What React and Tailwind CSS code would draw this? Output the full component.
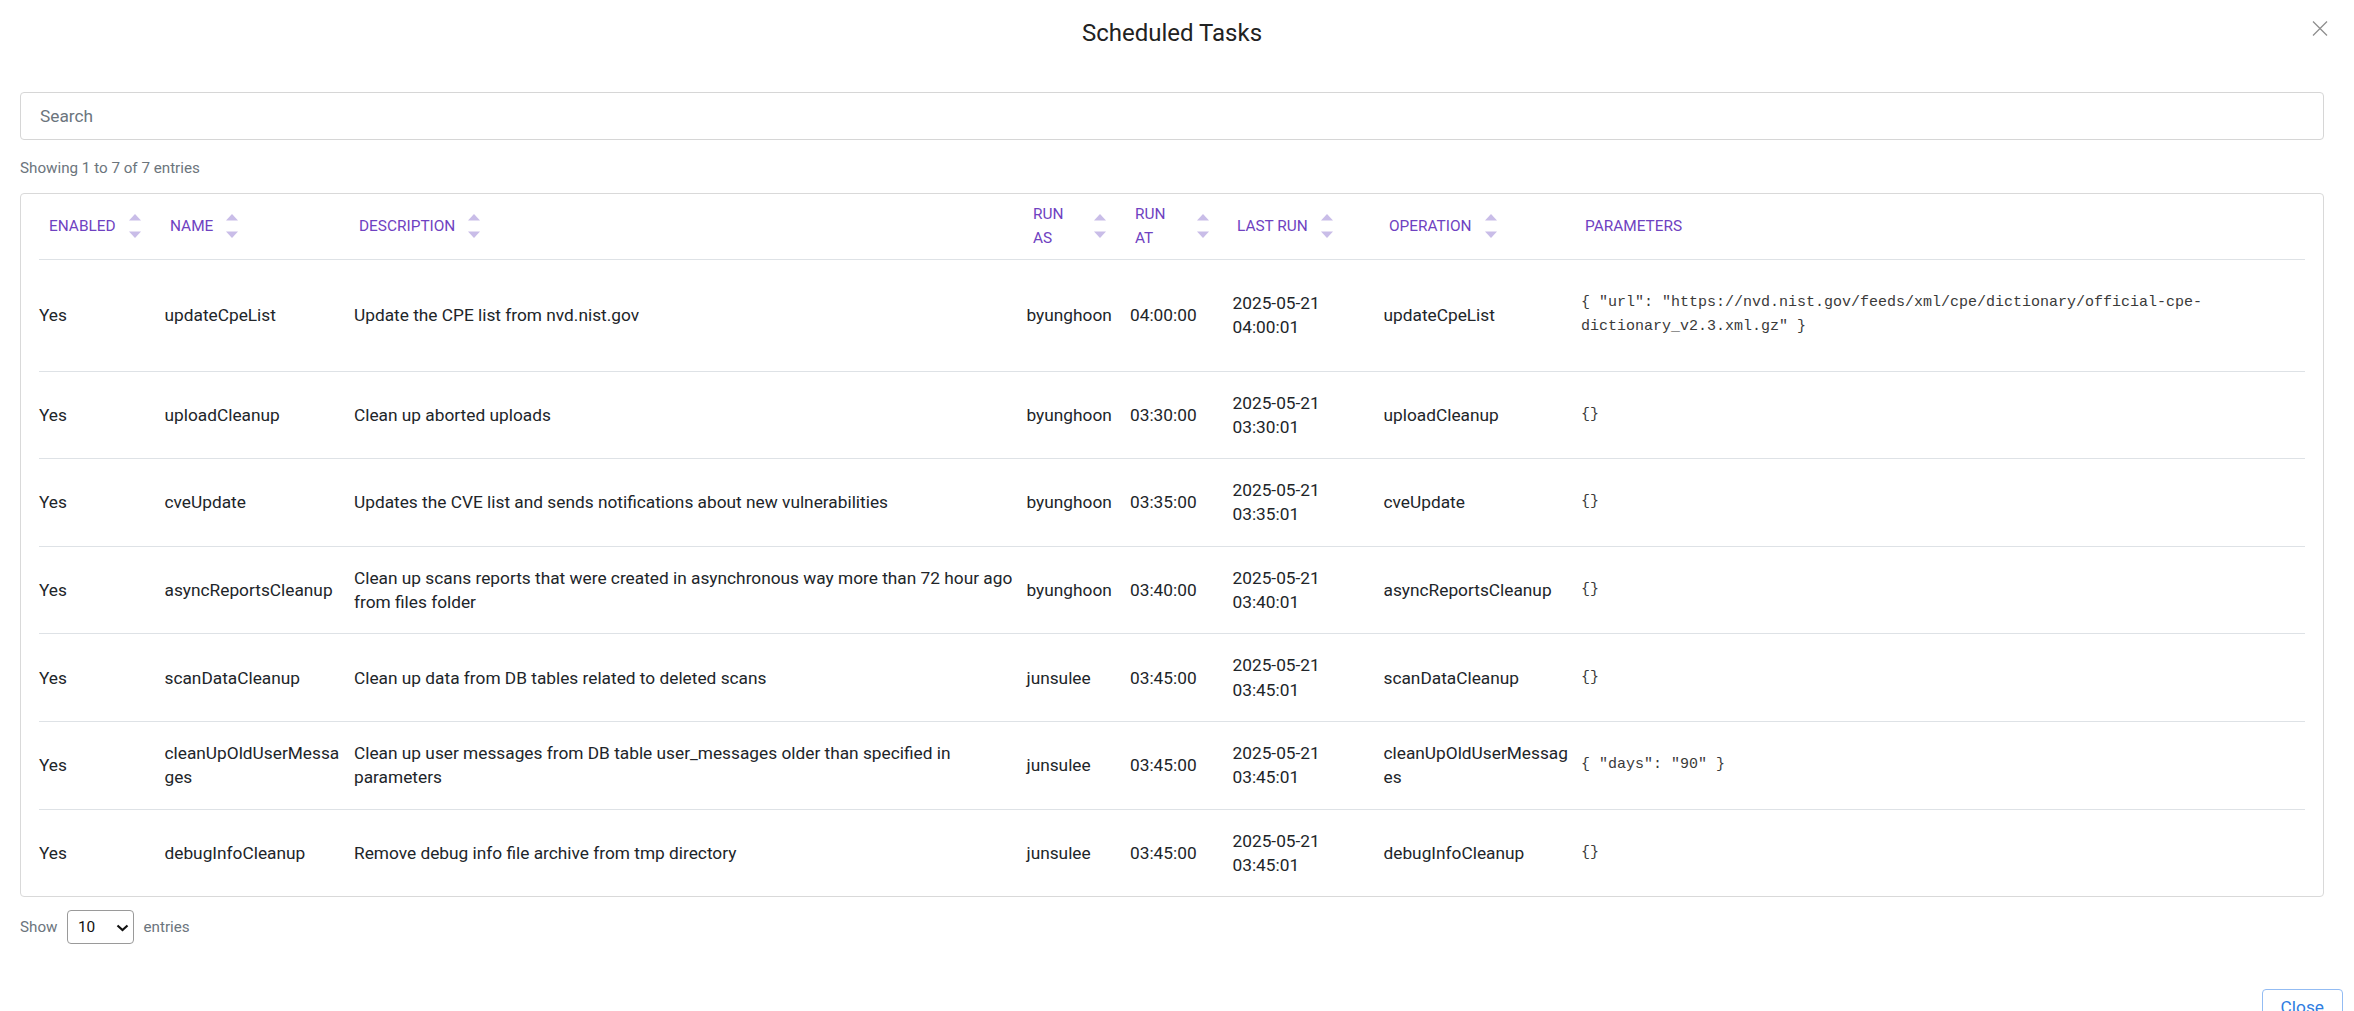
import React from 'react';

const tasks = [
  {
    name: 'updateCpeList',
    desc: 'Update the CPE list from nvd.nist.gov',
    runAs: 'byunghoon',
    runAt: '04:00:00',
    date: '2025-05-21',
    time: '04:00:01',
    op: 'updateCpeList',
    params: '{ "url": "https://nvd.nist.gov/feeds/xml/cpe/dictionary/official-cpe-dictionary_v2.3.xml.gz" }',
  },
  { name: 'uploadCleanup', desc: 'Clean up aborted uploads', runAs: 'byunghoon', runAt: '03:30:00', date: '2025-05-21', time: '03:30:01', op: 'uploadCleanup', params: '{}' },
  { name: 'cveUpdate', desc: 'Updates the CVE list and sends notifications about new vulnerabilities', runAs: 'byunghoon', runAt: '03:35:00', date: '2025-05-21', time: '03:35:01', op: 'cveUpdate', params: '{}' },
  { name: 'asyncReportsCleanup', desc: 'Clean up scans reports that were created in asynchronous way more than 72 hour ago from files folder', runAs: 'byunghoon', runAt: '03:40:00', date: '2025-05-21', time: '03:40:01', op: 'asyncReportsCleanup', params: '{}' },
  { name: 'scanDataCleanup', desc: 'Clean up data from DB tables related to deleted scans', runAs: 'junsulee', runAt: '03:45:00', date: '2025-05-21', time: '03:45:01', op: 'scanDataCleanup', params: '{}' },
  { name: 'cleanUpOldUserMessages', desc: 'Clean up user messages from DB table user_messages older than specified in parameters', runAs: 'junsulee', runAt: '03:45:00', date: '2025-05-21', time: '03:45:01', op: 'cleanUpOldUserMessages', params: '{ "days": "90" }' },
  { name: 'debugInfoCleanup', desc: 'Remove debug info file archive from tmp directory', runAs: 'junsulee', runAt: '03:45:00', date: '2025-05-21', time: '03:45:01', op: 'debugInfoCleanup', params: '{}' },
];

function SortArrows() {
  return (
    <svg width="12" height="24" viewBox="0 0 12 24" className="ml-[13px] shrink-0">
      <path d="M0 6.5 L6 0 L12 6.5 Z" fill="#c9bde8" />
      <path d="M0 17.5 L12 17.5 L6 24 Z" fill="#c9bde8" />
    </svg>
  );
}

function HeadCell({ className, children, sortable = true, labelClass = '' }) {
  return (
    <th className={`pt-[8px] pb-[9px] text-left align-middle font-normal ${className}`}>
      <div className="flex items-center">
        <span className={`uppercase leading-[24px] ${labelClass}`}>{children}</span>
        {sortable && <SortArrows />}
      </div>
    </th>
  );
}

export default function App() {
  return (
    <div className="relative min-h-screen bg-white pt-[19px] font-[Roboto,sans-serif] text-[#212529]">
      <button className="absolute right-[26px] top-[21px] text-[#8f8f8f]" aria-label="close">
        <svg width="16" height="15" viewBox="0 0 16 15" fill="none" stroke="currentColor" strokeWidth="1.3">
          <path d="M1 0.5 L15 14.5 M15 0.5 L1 14.5" />
        </svg>
      </button>

      <div className="pl-[20px] pr-[30px]">
        <h1 className="text-center text-[24px] leading-[29px] font-normal text-[#222]">Scheduled Tasks</h1>

        <input
          type="text"
          placeholder="Search"
          className="mt-[44px] block h-[48px] w-full rounded-[4px] border border-[#d6d6d6] pl-[19px] text-[17.3px] outline-none placeholder:text-[#6c757d]"
        />

        <div className="mt-[17px] text-[15.2px] leading-[22px] text-[#6c757d]">Showing 1 to 7 of 7 entries</div>

        <div className="mt-[14px] rounded-[4px] border border-[#d9d9d9] px-[18px]">
          <table className="w-full table-fixed">
            <colgroup>
              <col className="w-[125.5px]" />
              <col className="w-[189.5px]" />
              <col className="w-[672.5px]" />
              <col className="w-[103.5px]" />
              <col className="w-[102.5px]" />
              <col className="w-[151px]" />
              <col className="w-[197.5px]" />
              <col />
            </colgroup>
            <thead>
              <tr className="border-b border-[#dee2e6] text-[15.4px] text-[#6f42c1]">
                <HeadCell className="pl-[10px]">Enabled</HeadCell>
                <HeadCell className="pl-[5.5px]">Name</HeadCell>
                <HeadCell className="pl-[5px]">Description</HeadCell>
                <HeadCell className="pl-[6.5px]" labelClass="w-[48px]">
                  Run<br />As
                </HeadCell>
                <HeadCell className="pl-[5px]" labelClass="w-[49px]">
                  Run<br />At
                </HeadCell>
                <HeadCell className="pl-[4.5px]">Last Run</HeadCell>
                <HeadCell className="pl-[5.5px]">Operation</HeadCell>
                <HeadCell className="pl-[4px]" sortable={false}>Parameters</HeadCell>
              </tr>
            </thead>
            <tbody className="text-[17.3px] leading-[24.2px]">
              {tasks.map((t, i) => (
                <tr key={t.name} className={i < tasks.length - 1 ? 'border-b border-[#dee2e6]' : ''}>
                  <td className="py-[19px] pr-[10px] align-middle">Yes</td>
                  <td className="py-[19px] pr-[10px] align-middle [overflow-wrap:anywhere]">{t.name}</td>
                  <td className="py-[19px] pr-[4px] align-middle">{t.desc}</td>
                  <td className="py-[19px] pr-[10px] align-middle">{t.runAs}</td>
                  <td className="py-[19px] pr-[10px] align-middle">{t.runAt}</td>
                  <td className="py-[19px] pr-[10px] align-middle">
                    <span className="block">{t.date}</span>
                    <span className="block">{t.time}</span>
                  </td>
                  <td className="py-[19px] pr-[10px] align-middle [overflow-wrap:anywhere]">{t.op}</td>
                  <td className="py-[19px] pr-[10px] align-middle">
                    <pre className="my-[12.3px] whitespace-pre-wrap font-['Liberation_Mono',monospace] text-[15px] leading-[24px] text-[#3a3a3a]">
                      {t.params}
                    </pre>
                  </td>
                </tr>
              ))}
            </tbody>
          </table>
        </div>

        <div className="mt-[13px] flex items-center gap-[9.5px] text-[15.2px] text-[#6c757d]">
          <span>Show</span>
          <div className="relative">
            <select className="h-[34px] w-[67px] appearance-none rounded-[4px] border border-[#9a9a9a] bg-white pl-[10px] text-[15.4px] text-[#111] outline-none">
              <option>10</option>
              <option>25</option>
              <option>50</option>
              <option>100</option>
            </select>
            <svg width="13" height="8" viewBox="0 0 13 8" className="pointer-events-none absolute left-[49px] top-[14px]">
              <path d="M1.5 1.5 L6.5 6 L11.5 1.5" fill="none" stroke="#111" strokeWidth="2.2" />
            </svg>
          </div>
          <span>entries</span>
        </div>
      </div>

      <div className="mt-[45px] flex justify-end pr-[11px] pb-[20px]">
        <button className="h-[38px] rounded-[4px] border border-[#93bcf3] px-[18px] text-[17.3px] text-[#2f7de1]">Close</button>
      </div>
    </div>
  );
}
